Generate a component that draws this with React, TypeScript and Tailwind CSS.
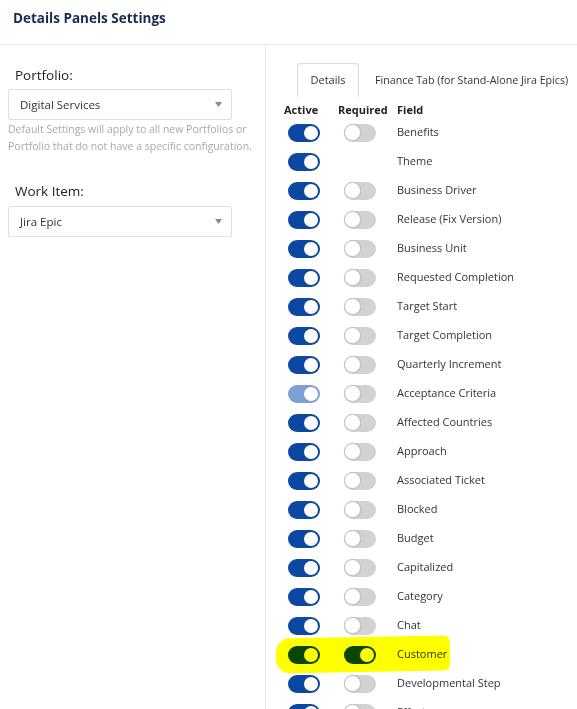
import React from "react";

type Row = { name: string; active: "on" | "dim"; required: "on" | "off" | null; mark?: boolean };

const rows: Row[] = [
  { name: "Benefits", active: "on", required: "off" },
  { name: "Theme", active: "on", required: null },
  { name: "Business Driver", active: "on", required: "off" },
  { name: "Release (Fix Version)", active: "on", required: "off" },
  { name: "Business Unit", active: "on", required: "off" },
  { name: "Requested Completion", active: "on", required: "off" },
  { name: "Target Start", active: "on", required: "off" },
  { name: "Target Completion", active: "on", required: "off" },
  { name: "Quarterly Increment", active: "on", required: "off" },
  { name: "Acceptance Criteria", active: "dim", required: "off" },
  { name: "Affected Countries", active: "on", required: "off" },
  { name: "Approach", active: "on", required: "off" },
  { name: "Associated Ticket", active: "on", required: "off" },
  { name: "Blocked", active: "on", required: "off" },
  { name: "Budget", active: "on", required: "off" },
  { name: "Capitalized", active: "on", required: "off" },
  { name: "Category", active: "on", required: "off" },
  { name: "Chat", active: "on", required: "off" },
  { name: "Customer", active: "on", required: "on", mark: true },
  { name: "Developmental Step", active: "on", required: "off" },
  { name: "Effort", active: "on", required: "off" },
];

function Toggle({ state }: { state: "on" | "off" | "dim" }) {
  if (state === "off") {
    return (
      <div className="flex h-[18px] w-[32px] items-center rounded-full bg-[#d2d2d2]">
        <div className="h-[17px] w-[17px] rounded-full border border-[#c4c4c4] bg-white shadow-[0_0_1px_rgba(0,0,0,0.2)]" />
      </div>
    );
  }
  return (
    <div
      className={
        state === "dim"
          ? "flex h-[18px] w-[32px] items-center justify-end rounded-full bg-[#7f9fd2] pr-[2px]"
          : "flex h-[18px] w-[32px] items-center justify-end rounded-full bg-[#0c47a1] pr-[2px]"
      }
    >
      <div className="h-[14px] w-[14px] rounded-full bg-white" />
    </div>
  );
}

function Select({ value }: { value: string }) {
  return (
    <div className="flex h-[31px] w-[224px] items-center justify-between rounded-[2px] border border-[#e0e0e0] bg-white pl-[11px] pr-[9px] text-[11.5px] text-[#333]">
      <span>{value}</span>
      <svg width="7" height="5" viewBox="0 0 7 5">
        <path d="M0 0h7L3.5 5z" fill="#8a8a8a" />
      </svg>
    </div>
  );
}

export default function App() {
  return (
    <div className="h-[709px] w-[577px] overflow-hidden bg-white font-['Open_Sans',sans-serif] text-[#333]">
      {/* header */}
      <div className="h-[45px] border-b border-[#e8e8e8] pl-[13px] pt-[8px]">
        <h1 className="text-[13.5px] font-bold leading-[20px] text-[#172b4d]">Details Panels Settings</h1>
      </div>

      <div className="flex">
        {/* left settings */}
        <div className="h-[664px] w-[266px] shrink-0 border-r border-[#e8e8e8] pl-[8px] pt-[20px]">
          <div className="pl-[7px] text-[13.5px] leading-[20px] text-[#222]">Portfolio:</div>
          <div className="mt-[4px]">
            <Select value="Digital Services" />
          </div>
          <p className="mt-[1px] w-[250px] text-[10.5px] leading-[17px] text-[#a9a9a9]">
            Default Settings will apply to all new Portfolios or Portfolio that do not have a specific configuration.
          </p>
          <div className="mt-[26px] pl-[7px] text-[13.5px] leading-[20px] text-[#222]">Work Item:</div>
          <div className="mt-[5px]">
            <Select value="Jira Epic" />
          </div>
        </div>

        {/* right fields */}
        <div className="flex-1 pt-[18px]">
          <div className="flex items-end pl-[31px]">
            <div className="flex h-[34px] w-[62px] items-center justify-center rounded-t-[4px] border border-b-0 border-[#dcdcdc] text-[11px] text-[#333]">
              Details
            </div>
            <div className="flex h-[34px] items-center pl-[16px] text-[10.7px] text-[#333]">
              Finance Tab (for Stand-Alone Jira Epics)
            </div>
          </div>

          <div className="pl-[18px] pt-[6px]">
            <div className="flex h-[15px] items-center text-[11px] font-bold text-[#222]">
              <div className="w-[54px]">Active</div>
              <div className="w-[59px]">Required</div>
              <div>Field</div>
            </div>

            {rows.map((r) => (
              <div key={r.name} className="relative flex h-[29px] items-center">
                <div className="w-[54px] pl-[4px]">
                  <Toggle state={r.active} />
                </div>
                <div className="w-[59px] pl-[6px]">{r.required && <Toggle state={r.required} />}</div>
                <div className="text-[11px] text-[#333]">{r.name}</div>
                {r.mark && (
                  <div className="pointer-events-none absolute left-[-8px] top-[-3px] h-[35px] w-[174px] -rotate-[1deg] rounded-l-[14px] rounded-r-[6px] bg-[#ffff00] mix-blend-multiply" />
                )}
              </div>
            ))}
          </div>
        </div>
      </div>
    </div>
  );
}
